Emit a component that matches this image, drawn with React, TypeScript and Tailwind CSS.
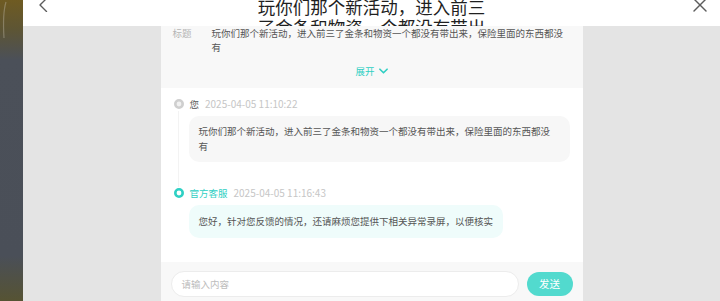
const FONT = { fontFamily: '"Noto Sans CJK SC", "Noto Sans", sans-serif' };

function BackIcon() {
  return (
    <svg viewBox="0 0 10 14" className="h-[14px] w-[10px]" fill="none" stroke="#5c5c5c" strokeWidth="1.4" strokeLinecap="round" strokeLinejoin="round">
      <path d="M8.5 0.5 2 7l6.5 6.5" />
    </svg>
  );
}

function CloseIcon() {
  return (
    <svg viewBox="0 0 14 14" className="h-[14px] w-[14px]" fill="none" stroke="#5c5c5c" strokeWidth="1.4" strokeLinecap="round">
      <path d="M1 1l12 12" />
      <path d="M13 1 1 13" />
    </svg>
  );
}

function ChevronDown() {
  return (
    <svg viewBox="0 0 10 6" className="h-[6px] w-[9px]" fill="none" stroke="#2fcfc3" strokeWidth="1.8" strokeLinecap="round" strokeLinejoin="round">
      <path d="M1 1l4 4 4-4" />
    </svg>
  );
}

function Dot({ staff }: { staff?: boolean }) {
  return (
    <svg viewBox="0 0 10 10" className="h-[10px] w-[10px]">
      <circle cx="5" cy="5" r="3.7" fill={staff ? "#ffffff" : "#f1f1f1"} stroke={staff ? "#2fd0c4" : "#cfcfcf"} strokeWidth="2.6" />
    </svg>
  );
}

const title =
  "玩你们那个新活动，进入前三了金条和物资一个都没有带出来，保险里面的东西都没有";

type Message = {
  who: string;
  time: string;
  text: string;
  staff?: boolean;
};

const messages: Message[] = [
  {
    who: "您",
    time: "2025-04-05 11:10:22",
    text: title,
  },
  {
    who: "官方客服",
    time: "2025-04-05 11:16:43",
    text: "您好，针对您反馈的情况，还请麻烦您提供下相关异常录屏，以便核实",
    staff: true,
  },
];

function MessageRow({ msg, last }: { msg: Message; last: boolean }) {
  return (
    <div className={last ? "" : "mb-[24px]"}>
      <div className="flex h-[14px] items-center">
        <Dot staff={msg.staff} />
        <span
          className={`ml-[6px] text-[9.5px] leading-[14px] ${
            msg.staff ? "text-[#2fcfc3]" : "text-[#555]"
          }`}
        >
          {msg.who}
        </span>
        <span className="ml-[6px] text-[10px] leading-[14px] text-[#c6c6c6]">{msg.time}</span>
      </div>
      <div
        className={`ml-[15px] mt-[5px] w-fit rounded-[10px] pl-[10px] text-[9.5px] leading-[15px] text-[#555] ${
          msg.staff ? "bg-[#effcfb] py-[9px] pr-[10px]" : "bg-[#f7f7f7] py-[8px] pr-[14px]"
        }`}
      >
        {msg.text}
      </div>
    </div>
  );
}

export default function App() {
  return (
    <div className="flex h-[301px] w-[720px] overflow-hidden" style={FONT}>
      <div className="w-[23px] bg-[linear-gradient(180deg,#6f5b22_0%,#5d5535_10%,#4b5059_20%,#4a4f58_85%,#565333_100%)]">
        <svg viewBox="0 0 23 60" className="h-[60px] w-[23px]" fill="none">
          <path d="M6 2C3.5 10 3 22 4 38" stroke="#b9b2a0" strokeOpacity="0.45" strokeWidth="1.2" />
        </svg>
      </div>

      <div className="flex flex-1 flex-col">
        <div className="flex h-[26px] items-start overflow-hidden bg-white">
          <div className="flex w-[55px] pl-[15px]">
            <div className="-mt-[2px]">
              <BackIcon />
            </div>
          </div>
          <div className="flex-1">
            <div className="mx-auto -mt-[3.5px] w-[236px] text-center text-[17.5px] leading-[20px] text-[#1f1f1f]">
              {title}
            </div>
          </div>
          <div className="flex w-[55px] justify-end pr-[13px]">
            <div className="-mt-[2px]">
              <CloseIcon />
            </div>
          </div>
        </div>

        <div className="flex flex-1 justify-center bg-[#e4e4e4]">
          <div className="flex w-[422px] flex-col">
            <div className="h-[62px] bg-[#f8f8f8] px-[12px]">
              <div className="flex text-[9.5px] leading-[14px]">
                <span className="w-[39px] shrink-0 text-[#b5b5b5]">标题</span>
                <span className="flex-1 text-[#555]">{title.slice(0, 37)}<br />{title.slice(37)}</span>
              </div>
              <div className="mt-[10px] flex items-center justify-center gap-[4px] text-[9.5px] leading-[14px] text-[#2fcfc3]">
                <span>展开</span>
                <ChevronDown />
              </div>
            </div>

            <div className="flex-1 bg-white px-[13px] pt-[9px]">
              <div className="relative">
                <div className="absolute left-[4.5px] top-[14px] h-[76px] border-l border-[#f3f3f3]" />
                {messages.map((m, i) => (
                  <MessageRow key={m.time} msg={m} last={i === messages.length - 1} />
                ))}
              </div>
            </div>

            <div className="flex h-[39px] items-start gap-[8px] bg-[#f8f8f8] px-[10px] pt-[9px]">
              <div className="flex h-[26px] flex-1 items-center rounded-full border border-[#ececec] bg-white px-[10px] text-[9.5px] text-[#bdbdbd]">
                请输入内容
              </div>
              <button className="mt-[1px] h-[24px] w-[46px] rounded-full bg-[#52dace] text-[10.5px] text-white">
                发送
              </button>
            </div>
          </div>
        </div>
      </div>
    </div>
  );
}
